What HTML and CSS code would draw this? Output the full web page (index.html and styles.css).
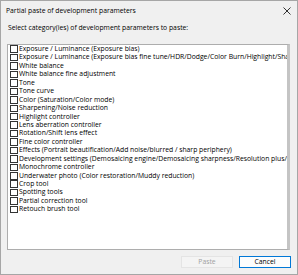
FILE: index.html
```html
<!DOCTYPE html>
<html lang="en">

<head>
  <meta charset="utf-8">
  <title>Partial paste of development parameters</title>
  <link rel="stylesheet" href="styles.css">
</head>

<body>
  <div class="dialog">
    <div class="titlebar">
      <span class="title">Partial paste of development parameters</span>
      <svg class="close" width="8" height="8" viewBox="0 0 8 8">
        <path d="M0.5 0.5L7.5 7.5M7.5 0.5L0.5 7.5" stroke="#333" stroke-width="1" fill="none" />
      </svg>
    </div>
    <div class="prompt">Select category(ies) of development parameters to paste:</div>
    <div class="list">
      <label class="item"><span class="box"></span>Exposure / Luminance (Exposure bias)</label>
      <label class="item"><span class="box"></span>Exposure / Luminance (Exposure bias fine tune/HDR/Dodge/Color Burn/Highlight/Shadow)</label>
      <label class="item"><span class="box"></span>White balance</label>
      <label class="item"><span class="box"></span>White balance fine adjustment</label>
      <label class="item"><span class="box"></span>Tone</label>
      <label class="item"><span class="box"></span>Tone curve</label>
      <label class="item"><span class="box"></span>Color (Saturation/Color mode)</label>
      <label class="item"><span class="box"></span>Sharpening/Noise reduction</label>
      <label class="item"><span class="box"></span>Highlight controller</label>
      <label class="item"><span class="box"></span>Lens aberration controller</label>
      <label class="item"><span class="box"></span>Rotation/Shift lens effect</label>
      <label class="item"><span class="box"></span>Fine color controller</label>
      <label class="item"><span class="box"></span>Effects (Portrait beautification/Add noise/blurred / sharp periphery)</label>
      <label class="item"><span class="box"></span>Development settings (Demosaicing engine/Demosaicing sharpness/Resolution plus/Color space)</label>
      <label class="item"><span class="box"></span>Monochrome controller</label>
      <label class="item"><span class="box"></span>Underwater photo (Color restoration/Muddy reduction)</label>
      <label class="item"><span class="box"></span>Crop tool</label>
      <label class="item"><span class="box"></span>Spotting tools</label>
      <label class="item"><span class="box"></span>Partial correction tool</label>
      <label class="item"><span class="box"></span>Retouch brush tool</label>
    </div>
    <div class="actions">
      <button class="btn" disabled>Paste</button>
      <button class="btn default">Cancel</button>
    </div>
  </div>
</body>

</html>
```

FILE: styles.css
```css
body,
html {
  margin: 0;
  padding: 0;
  height: 100%;
  overflow: hidden;
}

.dialog {
  box-sizing: border-box;
  width: 298px;
  height: 275px;
  background: #f0f0f0;
  border: 1px solid #a6a6a6;
  font-family: "Open Sans", sans-serif;
  font-size: 6.8px;
  color: #000;
  display: flex;
  flex-direction: column;
}

.titlebar {
  height: 19px;
  display: flex;
  align-items: center;
  justify-content: space-between;
  padding: 0 6px 0 5px;
}

.close {
  display: block;
}

.prompt {
  height: 16px;
  line-height: 16px;
  padding-left: 7px;
}

.list {
  box-sizing: border-box;
  margin: 8px 7px 0 6px;
  height: 206px;
  background: #fff;
  border: 1px solid #adadad;
  border-right: 3px solid #c4c4c4;
  overflow: hidden;
}

.item {
  display: flex;
  align-items: center;
  height: 8.45px;
  line-height: 8.45px;
  white-space: nowrap;
}

.box {
  flex: none;
  box-sizing: border-box;
  width: 7.5px;
  height: 7.5px;
  border: 1px solid #333;
  background: #fff;
  margin: 0 1.5px 0 2px;
}

.actions {
  display: flex;
  justify-content: flex-end;
  gap: 6px;
  padding: 6px 6px 0 0;
}

.btn {
  box-sizing: border-box;
  width: 52px;
  height: 12px;
  padding: 0;
  font-family: inherit;
  font-size: 6.8px;
  line-height: 1;
  border: 1px solid #adadad;
  background: #e1e1e1;
  color: #000;
}

.btn:disabled {
  background: #f4f4f4;
  border-color: #e4e4e4;
  color: #a0a0a0;
}

.default {
  border: 1px solid #0078d7;
  background: #fdfdfd;
}
```
